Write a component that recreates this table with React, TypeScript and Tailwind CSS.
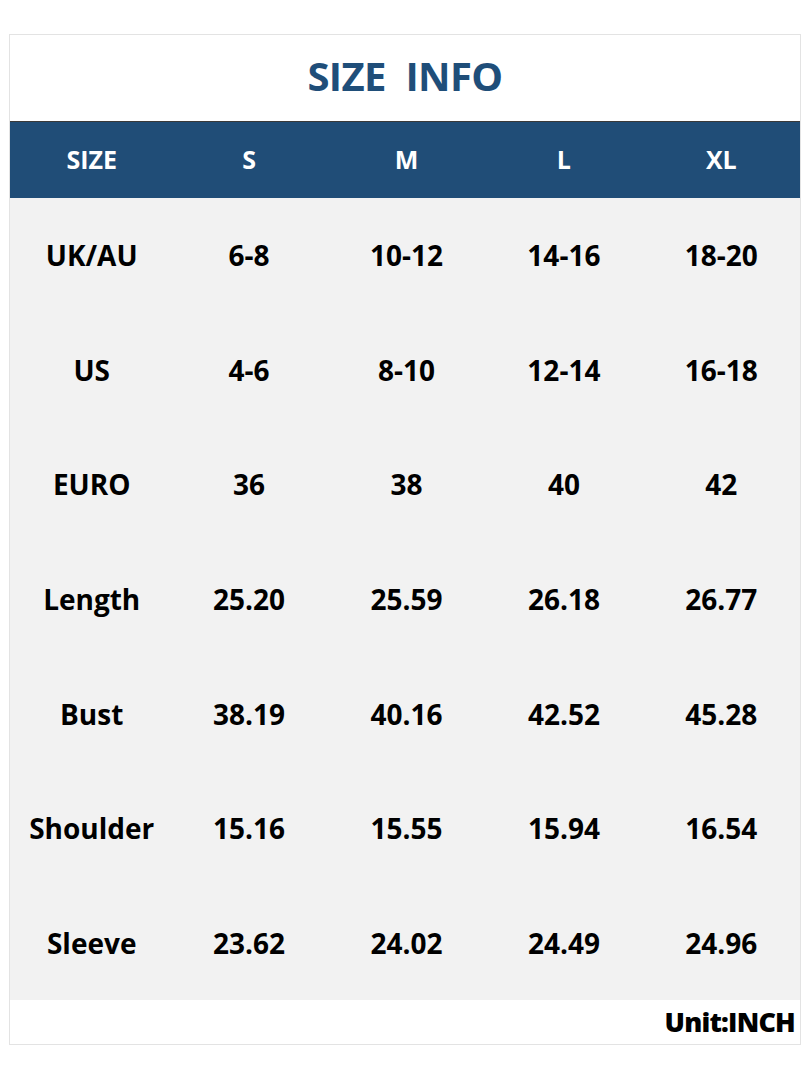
import React from 'react';

const sizes = ['S', 'M', 'L', 'XL'];

const rows: { label: string; values: string[] }[] = [
  { label: 'UK/AU', values: ['6-8', '10-12', '14-16', '18-20'] },
  { label: 'US', values: ['4-6', '8-10', '12-14', '16-18'] },
  { label: 'EURO', values: ['36', '38', '40', '42'] },
  { label: 'Length', values: ['25.20', '25.59', '26.18', '26.77'] },
  { label: 'Bust', values: ['38.19', '40.16', '42.52', '45.28'] },
  { label: 'Shoulder', values: ['15.16', '15.55', '15.94', '16.54'] },
  { label: 'Sleeve', values: ['23.62', '24.02', '24.49', '24.96'] },
];

export default function App() {
  return (
    <div
      className="w-[810px] h-[1080px] bg-white pt-[34px] px-[9px]"
      style={{ fontFamily: '"Open Sans", "Noto Sans", sans-serif' }}
    >
      <div className="w-[792px] border border-[#e3e3e3]">
        <div className="h-[86px] flex items-center justify-center bg-white pb-[5px]">
          <h1 className="text-[40px] font-bold text-[#1f4e79] whitespace-pre tracking-[-0.6px] leading-none">
            SIZE  INFO
          </h1>
        </div>
        <div className="h-px bg-[#3a3a3a]" />
        <div className="h-[76px] bg-[#204d77] grid grid-cols-5 items-center text-white text-[25px] font-bold pl-[3px]">
          <div className="text-center">SIZE</div>
          {sizes.map((s) => (
            <div key={s} className="text-center">
              {s}
            </div>
          ))}
        </div>
        <div className="bg-[#f2f2f2] flex flex-col pl-[3px]">
          {rows.map((r) => (
            <div
              key={r.label}
              className="h-[114.6px] grid grid-cols-5 items-center text-[28px] font-bold text-black"
            >
              <div className="text-center">{r.label}</div>
              {r.values.map((v, i) => (
                <div key={i} className="text-center">
                  {v}
                </div>
              ))}
            </div>
          ))}
        </div>
        <div className="h-[44px] bg-white flex items-center justify-end pr-[5px]">
          <span className="text-[27px] font-extrabold text-black tracking-[-0.8px]">Unit:INCH</span>
        </div>
      </div>
    </div>
  );
}
